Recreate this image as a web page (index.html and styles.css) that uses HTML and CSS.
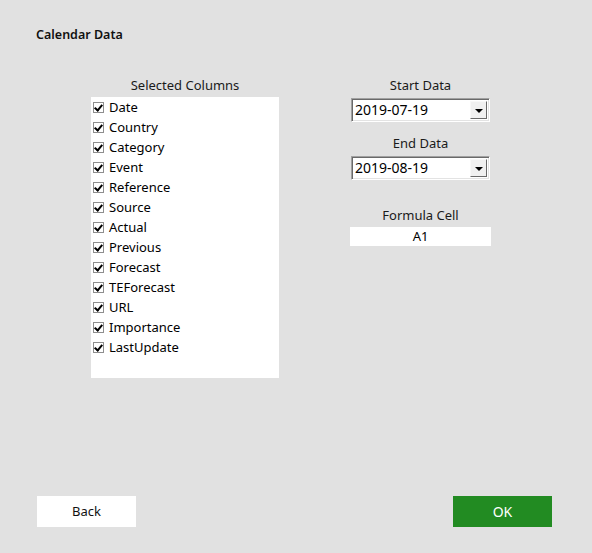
FILE: index.html
```html
<!DOCTYPE html>
<html>
<head>
<meta charset="utf-8">
<link rel="stylesheet" href="styles.css">
</head>
<body>
<div class="dialog">
  <div class="title">Calendar Data</div>
  <div class="main">
    <div class="left-col">
      <div class="label">Selected Columns</div>
      <ul class="listbox">
        <li class="item"><span class="check"></span>Date</li>
        <li class="item"><span class="check"></span>Country</li>
        <li class="item"><span class="check"></span>Category</li>
        <li class="item"><span class="check"></span>Event</li>
        <li class="item"><span class="check"></span>Reference</li>
        <li class="item"><span class="check"></span>Source</li>
        <li class="item"><span class="check"></span>Actual</li>
        <li class="item"><span class="check"></span>Previous</li>
        <li class="item"><span class="check"></span>Forecast</li>
        <li class="item"><span class="check"></span>TEForecast</li>
        <li class="item"><span class="check"></span>URL</li>
        <li class="item"><span class="check"></span>Importance</li>
        <li class="item"><span class="check"></span>LastUpdate</li>
      </ul>
    </div>
    <div class="right-col">
      <div class="label">Start Data</div>
      <div class="combo combo-first">
        <span class="combo-value">2019-07-19</span>
        <span class="combo-btn"><span class="arrow"></span></span>
      </div>
      <div class="label label-end">End Data</div>
      <div class="combo">
        <span class="combo-value">2019-08-19</span>
        <span class="combo-btn"><span class="arrow"></span></span>
      </div>
      <div class="label label-formula">Formula Cell</div>
      <div class="cellbox">A1</div>
    </div>
  </div>
  <div class="footer">
    <div class="btn btn-back">Back</div>
    <div class="btn btn-ok">OK</div>
  </div>
</div>
</body>
</html>
```

FILE: styles.css
```css
* { box-sizing: border-box; }
html, body {
  margin: 0;
  padding: 0;
  background: #e1e1e1;
}
body {
  font-family: "Noto Sans", "Open Sans", sans-serif;
  font-size: 13px;
  color: #111;
}
.dialog {
  width: 592px;
  height: 553px;
  display: flex;
  flex-direction: column;
}
.title {
  margin: 27px 0 0 36px;
  line-height: 16px;
  font-size: 12.5px;
  font-weight: 600;
  color: #111;
}
.main {
  display: flex;
  gap: 71px;
  margin: 32px 0 0 91px;
  flex: 1;
}
.left-col {
  width: 188px;
  display: flex;
  flex-direction: column;
}
.label {
  height: 20px;
  line-height: 20px;
  text-align: center;
  color: #1a1a1a;
}
.listbox {
  list-style: none;
  margin: 2px 0 0 0;
  padding: 0;
  background: #fff;
  height: 281px;
}
.item {
  height: 20px;
  line-height: 20px;
  display: flex;
  align-items: center;
  color: #000;
}
.check {
  width: 11px;
  height: 11px;
  margin: 0 5px 0 2px;
  border: 1px solid #8e8e8e;
  background: #fff;
  position: relative;
  flex: none;
}
.check::after {
  content: "";
  position: absolute;
  left: 2px;
  top: 0px;
  width: 3px;
  height: 6px;
  border: solid #000;
  border-width: 0 2px 2px 0;
  transform: rotate(40deg);
}
.right-col {
  width: 141px;
  display: flex;
  flex-direction: column;
}
.combo {
  margin: 0 1px;
  height: 24px;
  background: #fff;
  border-top: 1px solid #a0a0a0;
  border-left: 1px solid #a0a0a0;
  border-right: 1px solid #fff;
  border-bottom: 1px solid #fff;
  box-shadow: inset 1px 1px 0 #696969, inset -1px -1px 0 #e3e3e3;
  display: flex;
  align-items: center;
  padding: 2px 2px 2px 3px;
}
.combo-first { margin-top: 3px; }
.combo-value {
  flex: 1;
  font-size: 14px;
  color: #000;
  line-height: 18px;
}
.combo-btn {
  width: 17px;
  height: 18px;
  background: #f0f0f0;
  border-top: 1px solid #f8f8f8;
  border-left: 1px solid #f8f8f8;
  border-right: 1px solid #696969;
  border-bottom: 1px solid #696969;
  display: flex;
  align-items: center;
  justify-content: center;
}
.arrow {
  width: 0;
  height: 0;
  border-left: 4px solid transparent;
  border-right: 4px solid transparent;
  border-top: 4px solid #000;
  margin-top: 1px;
}
.label-end { margin: 11px 0 3px; }
.label-formula { margin: 25px 0 2px; }
.cellbox {
  height: 19px;
  background: #fff;
  text-align: center;
  line-height: 19px;
  font-size: 13px;
  color: #000;
}
.footer {
  display: flex;
  justify-content: space-between;
  margin: 0 40px 26px 37px;
}
.btn {
  width: 99px;
  height: 31px;
  line-height: 31px;
  text-align: center;
  font-size: 13px;
}
.btn-back {
  background: #fff;
  color: #111;
}
.btn-ok {
  background: #228b22;
  color: #fff;
  font-size: 14px;
}
```
